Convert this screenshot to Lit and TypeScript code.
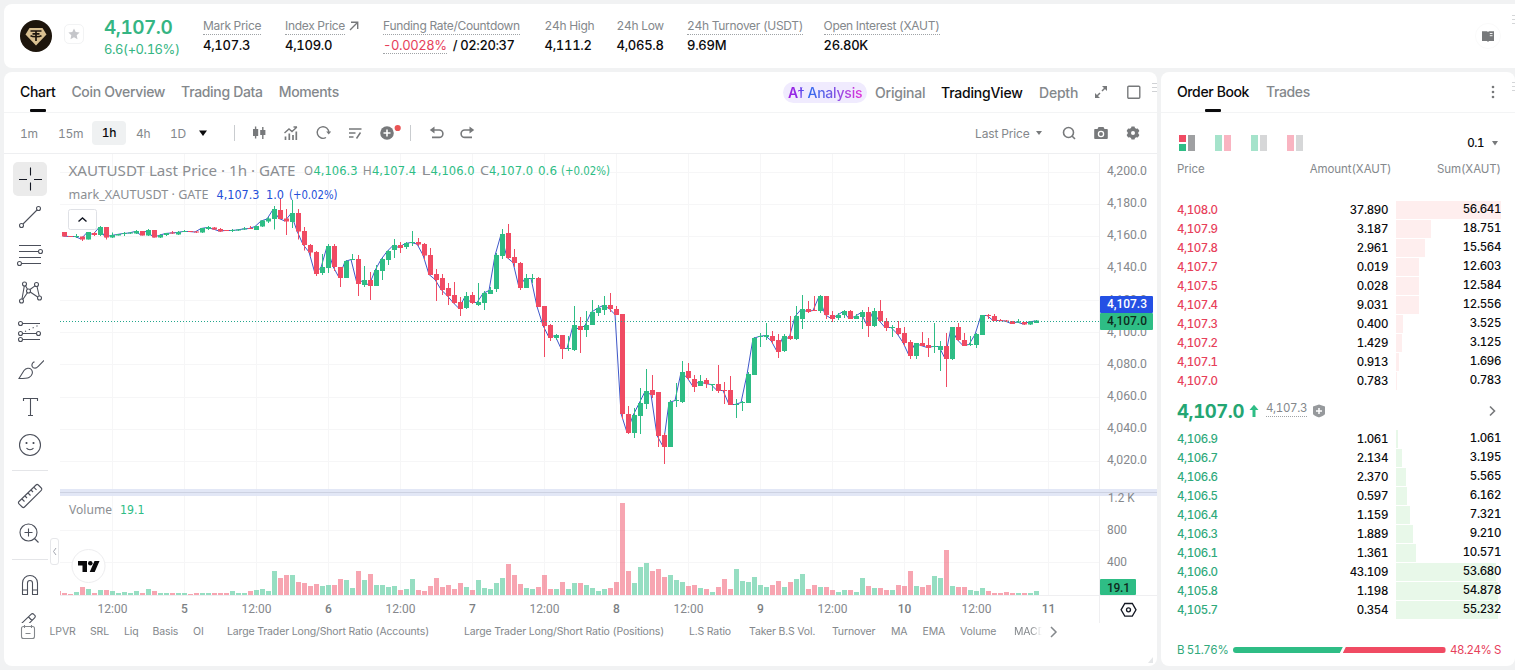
import { LitElement, css, html, svg } from 'lit';
import { customElement, property } from 'lit/decorators.js';
import { classMap } from 'lit/directives/class-map.js';
import { styleMap } from 'lit/directives/style-map.js';

// high, body top, body bottom, low, rising, volume (all in canvas units)
type Candle = [number, number, number, number, number, number];

const CANDLES: Candle[] = [
    [232, 232, 236.5, 236.5, 0, 2], [236, 236, 237, 237, 0, 1], [234, 236, 237, 238, 1, 3], [236.5, 236.5, 239.5, 241, 0, 8],
    [232, 232, 239.5, 239.5, 1, 6], [232, 233, 235, 236, 0, 2], [226, 227, 235, 236, 1, 5], [227, 227, 237.5, 239.5, 0, 5],
    [232.5, 235, 237.5, 238, 1, 4], [234, 234, 235.5, 235.5, 1, 2], [232, 233, 234, 236, 1, 3], [232, 232.5, 233.5, 234, 1, 2],
    [230, 231, 233.5, 234, 1, 4], [231, 231, 235.5, 235.5, 0, 2], [229, 230, 235.5, 236, 1, 6], [230, 230, 237.5, 237.5, 0, 4],
    [234, 235, 237.5, 238, 1, 2], [233, 233, 235, 236, 1, 2], [231, 232.5, 233.5, 234, 0, 2], [231, 232, 234.5, 235, 1, 2],
    [230, 231, 232, 232, 1, 2], [231, 231, 232, 232, 0, 1], [231, 231.5, 232.5, 233, 0, 2], [228, 228, 232.5, 233, 1, 2],
    [226, 227, 229, 230, 1, 2], [227, 227.5, 229.5, 230, 0, 2], [228, 229, 231.5, 232, 0, 2], [230, 230, 231, 231, 0, 2],
    [229, 230, 231, 232, 1, 4], [229, 229.5, 230.5, 231, 1, 2], [227, 228.5, 229.5, 230, 1, 2], [226, 228, 229, 229, 0, 4],
    [226, 226, 230, 230, 1, 5], [220, 220.5, 226.5, 227, 1, 6], [217, 218.5, 221.5, 223, 1, 4], [206, 209, 219, 229.5, 1, 24],
    [198, 210, 219, 219, 0, 17], [209, 218.5, 221.5, 235, 0, 20], [200, 213, 222, 228, 1, 20], [209, 213, 231.5, 239.5, 0, 13],
    [227, 231, 245, 250.5, 0, 12], [244, 245, 252.5, 256.5, 0, 9], [251, 252, 274, 276, 0, 11], [254, 267, 273, 275, 1, 9],
    [244, 246, 268, 273, 1, 10], [244, 246, 267, 271, 0, 10], [267, 267, 278, 287, 0, 16], [260, 261, 278, 278, 1, 15],
    [254, 259, 260, 260, 1, 7], [255, 259, 284, 296, 0, 24], [266, 280, 285, 287, 1, 15], [272, 280, 286, 300, 0, 21],
    [265, 270, 286, 286, 1, 10], [258, 259, 271, 280, 1, 10], [250, 251, 260, 265, 1, 8], [239, 245, 250, 258, 1, 9],
    [242, 245, 248, 253, 0, 5], [242, 243, 247, 249, 1, 6], [231, 242, 243, 246, 1, 16], [238, 242, 244.5, 246, 0, 5],
    [243, 244, 255.5, 260, 0, 4], [248, 255, 275, 275, 0, 9], [269, 274, 280, 301, 0, 17], [274, 278, 290, 295, 0, 8],
    [283, 288, 296, 305, 0, 10], [282, 295, 303, 304, 0, 6], [297, 302, 309, 316, 0, 12], [292, 296, 308, 309, 1, 8],
    [292, 295, 303, 304, 0, 5], [283, 302, 305, 306, 1, 15], [291, 293, 303, 310, 1, 7], [287, 290, 294, 294, 1, 6],
    [253, 255, 289, 292, 1, 12], [229, 234, 256, 259, 1, 17], [224, 233, 258, 259, 0, 31], [249, 257, 263, 267, 0, 20],
    [262, 263, 288, 290, 0, 11], [274, 278, 288, 288, 1, 7], [274, 278, 279, 283, 1, 6], [277, 278, 307, 307, 0, 8],
    [306, 306, 326, 357, 0, 20], [324, 325, 338, 341, 0, 6], [334, 335, 338, 340, 1, 6], [335, 335, 349, 359, 0, 13],
    [336, 348, 349, 351, 1, 6], [306, 325, 350, 351, 1, 12], [317, 326, 330, 353, 0, 12], [311, 325, 330, 337, 1, 10],
    [300, 312, 325, 325, 1, 7], [305, 308, 313, 316, 1, 4], [296, 305, 310, 315, 1, 6], [293, 305, 309, 312, 0, 7],
    [306, 309, 315, 315, 0, 13], [314, 314, 414, 419, 0, 92], [406, 414, 433, 434, 0, 24], [408, 415, 433, 438, 1, 12],
    [388, 403, 416, 434, 1, 28], [369, 391, 404, 409, 1, 32], [375, 390, 395, 398, 0, 24], [392, 392, 436, 447, 0, 26],
    [433, 435, 447, 464, 0, 18], [400, 402, 447, 447, 1, 20], [383, 400, 401, 407, 1, 15], [361, 372, 402, 403, 1, 13],
    [363, 371, 378, 380, 0, 9], [375, 379, 387, 392, 0, 10], [375, 381, 386, 386, 1, 7], [378, 380, 384, 388, 0, 6],
    [384, 384, 385, 391, 1, 3], [365, 384, 391, 393, 0, 8], [382, 390, 391, 404, 0, 16], [376, 390, 405, 405, 0, 6],
    [399, 404, 405, 418, 1, 26], [401, 402, 403, 411, 1, 14], [372, 374, 403, 403, 1, 13], [337, 338, 375, 375, 1, 18],
    [333, 336, 337, 347, 1, 10], [323, 335, 337, 340, 1, 8], [331, 336, 341, 344, 0, 10], [334, 340, 352, 358, 0, 14],
    [334, 336, 351, 352, 1, 8], [316, 336, 339, 340, 0, 13], [306, 316, 339, 340, 1, 16], [295, 309, 319, 329, 1, 21],
    [301, 309, 312, 313, 0, 6], [296, 310, 311, 311, 0, 10], [295, 296, 311, 313, 1, 8], [296, 296, 315, 319, 0, 8],
    [311, 315, 319, 322, 0, 5], [313, 315, 318, 320, 1, 3], [310, 311, 315, 318, 1, 5], [310, 311, 319, 319, 0, 5],
    [314, 316, 319, 319, 1, 3], [310, 312, 317, 329, 1, 17], [307, 312, 326, 337, 0, 9], [308, 311, 326, 327, 1, 7],
    [300, 311, 321, 322, 0, 7], [318, 321, 328, 331, 0, 5], [325, 327, 328, 337, 1, 5], [321, 328, 334, 335, 0, 10],
    [327, 333, 343, 346, 0, 9], [340, 342, 356, 359, 0, 24], [343, 343, 356, 359, 1, 9], [332, 343, 346, 346, 0, 8],
    [338, 345, 348, 357, 0, 10], [323, 346, 347, 353, 1, 19], [341, 346, 350, 371, 1, 17], [333, 346, 359, 387, 0, 45],
    [327, 327, 359, 360, 1, 9], [323, 327, 340, 341, 0, 8], [333, 340, 346, 346, 0, 8], [336, 344, 345, 346, 1, 5],
    [333, 334, 345, 348, 1, 4], [315, 315, 335, 335, 1, 7], [314, 315, 316, 319, 0, 4], [314, 316, 321, 321, 0, 2],
    [319, 320, 321, 321, 0, 2], [320, 320.5, 321.5, 322, 0, 3], [321, 321, 324, 324, 0, 2], [319, 321.5, 322.5, 323, 1, 2],
    [322, 322, 324.5, 325, 0, 2], [321.5, 321.5, 324.5, 325, 1, 2], [320, 320.5, 323, 323, 1, 4],
];

const ASKS: [string, string, string][] = [
    ['4,108.0', '37.890', '56.641'],
    ['4,107.9', '3.187', '18.751'],
    ['4,107.8', '2.961', '15.564'],
    ['4,107.7', '0.019', '12.603'],
    ['4,107.5', '0.028', '12.584'],
    ['4,107.4', '9.031', '12.556'],
    ['4,107.3', '0.400', '3.525'],
    ['4,107.2', '1.429', '3.125'],
    ['4,107.1', '0.913', '1.696'],
    ['4,107.0', '0.783', '0.783'],
];

const BIDS: [string, string, string][] = [
    ['4,106.9', '1.061', '1.061'],
    ['4,106.7', '2.134', '3.195'],
    ['4,106.6', '2.370', '5.565'],
    ['4,106.5', '0.597', '6.162'],
    ['4,106.4', '1.159', '7.321'],
    ['4,106.3', '1.889', '9.210'],
    ['4,106.1', '1.361', '10.571'],
    ['4,106.0', '43.109', '53.680'],
    ['4,105.8', '1.198', '54.878'],
    ['4,105.7', '0.354', '55.232'],
];

const MAX_SUM = 56.641;

@customElement('trade-header')
export class TradeHeader extends LitElement {
    static styles = css`
        :host {
            display: flex;
            align-items: center;
            height: 64px;
            padding-left: 16px;
            background: #fff;
            border-radius: 8px 0 0 8px;
            box-sizing: border-box;
            position: relative;
            font-size: 12px;
            color: #84888c;
        }
        .logo {
            width: 32px;
            height: 32px;
        }
        .star {
            width: 18px;
            height: 18px;
            margin-left: 12px;
            margin-top: -4px;
            border: 1px solid #f2f3f4;
            border-radius: 5px;
        }
        .last {
            width: 99px;
            margin-left: 20px;
            padding-top: 4px;
        }
        .last b {
            display: block;
            font-size: 19px;
            line-height: 22px;
            font-weight: 600;
            letter-spacing: -.5px;
            color: #35b583;
        }
        .last span {
            display: block;
            font-size: 13px;
            line-height: 20px;
            letter-spacing: -.45px;
            color: #35b583;
        }
        .stats {
            display: grid;
            grid-template-columns: 82px 98px 161.5px 72px 70.5px 136.5px 130px;
        }
        .label {
            display: flex;
            align-items: flex-start;
            height: 17px;
            line-height: 16px;
            white-space: nowrap;
            letter-spacing: -.3px;
        }
        .label svg {
            margin: 3px 0 0 4px;
        }
        .dotted {
            height: 16px;
            border-bottom: 1px dotted #9fa3a6;
        }
        .value {
            margin-top: 1px;
            height: 19px;
            line-height: 18px;
            font-size: 13px;
            font-weight: 500;
            letter-spacing: -.28px;
            white-space: nowrap;
            color: #0b0b0d;
        }
        .value .red {
            display: inline-block;
            line-height: 16px;
            font-weight: 400;
            color: #e7405a;
        }
        .value.rate {
            letter-spacing: -.4px;
        }
        .book {
            position: absolute;
            right: 14px;
            top: 19px;
        }
        .grip {
            position: absolute;
            right: 0;
            top: 10px;
        }
    `

    render() {
        return html`
            <svg class="logo" viewBox="0 0 32 32">
                <circle cx="16" cy="16" r="16" fill="#1d150c"/>
                <path d="M9.5 8h13l4 6.5L16 25.500 5.500 14.500z" fill="#d8bf90"/>
                <path d="M10.500 11h11M16 11v10M12.500 13.800h7M10.500 15.600c2 1.500 9 1.500 11 0" fill="none" stroke="#1d150c" stroke-width="1.700"/>
            </svg>
            <div class="star">
                <svg width="18" height="18" viewBox="0 0 18 18"><path d="M9 3.500l1.700 3.600 3.900.5-2.900 2.700.8 3.900L9 12.300l-3.500 1.900.8-3.900-2.900-2.700 3.900-.5z" fill="#c5c6ca"/></svg>
            </div>
            <div class="last"><b>4,107.0</b><span>6.6(+0.16%)</span></div>
            <div class="stats">
                <div><div class="label"><span class="dotted">Mark Price</span></div><div class="value">4,107.3</div></div>
                <div>
                    <div class="label">
                        <span class="dotted">Index Price</span>
                        <svg width="10" height="10" viewBox="0 0 10 10"><path d="M1 9l7.500-7.500M2 1.300h6.700V8" fill="none" stroke="#77797b" stroke-width="1.400"/></svg>
                    </div>
                    <div class="value">4,109.0</div>
                </div>
                <div><div class="label"><span class="dotted">Funding Rate/Countdown</span></div><div class="value rate"><span class="red dotted">-0.0028%</span>&nbsp; / 02:20:37</div></div>
                <div><div class="label">24h High</div><div class="value">4,111.2</div></div>
                <div><div class="label">24h Low</div><div class="value">4,065.8</div></div>
                <div><div class="label"><span class="dotted">24h Turnover (USDT)</span></div><div class="value">9.69M</div></div>
                <div><div class="label"><span class="dotted">Open Interest (XAUT)</span></div><div class="value">26.80K</div></div>
            </div>
            <svg class="book" width="26" height="26" viewBox="0 0 26 26">
                <circle cx="13" cy="13" r="12.500" fill="none" stroke="#fafafa"/>
                <path d="M7 8.200h5l1 .8 1-.8h5v9.800h-5l-1 1-1-1H7z" fill="#77797b"/>
                <path d="M14.800 10.500h2.700M14.800 12.700h2.700" stroke="#fff" stroke-width=".9"/>
            </svg>
            <svg class="grip" width="4" height="12" viewBox="0 0 4 12"><path d="M1 1.500h3M1 5.500h3M1 9.500h3" stroke="#d4d6d8"/></svg>
        `
    }
}

@customElement('tool-rail')
export class ToolRail extends LitElement {
    static styles = css`
        :host {
            display: flex;
            flex-direction: column;
            align-items: center;
            width: 36px;
            height: 463px;
            padding: 6px 12px 0 8px;
            overflow: hidden;
        }
        .tool {
            flex: none;
            display: flex;
            align-items: center;
            justify-content: center;
            width: 34px;
            height: 34px;
            margin: 2px 0;
            border-radius: 5px;
        }
        .tool.active {
            background: #ebebeb;
        }
        .tool svg {
            fill: none;
            stroke: #4c505b;
            stroke-width: 1.1;
        }
        .tool.active svg {
            stroke: #131722;
        }
        .line {
            flex: none;
            width: 36px;
            height: 1px;
            margin: 6px 0;
            background: #e4e5e8;
        }
    `

    private _icons = [
        svg`<path d="M14.500 2.500v8M14.500 17.500v8M3 14.500h8M18 14.500h8"/>`,
        svg`<circle cx="5.500" cy="22.500" r="2"/><circle cx="22.500" cy="5.500" r="2"/><path d="M7 21L21 7"/>`,
        svg`<path d="M3 4.500h22M3 10.500h19.500M3 16.500h22M5.500 22.500H25"/><circle cx="24.500" cy="10.500" r="2"/><circle cx="3.500" cy="22.500" r="2"/>`,
        svg`<circle cx="8.500" cy="5" r="2"/><circle cx="20.500" cy="5.500" r="2"/><circle cx="12.500" cy="12" r="2"/><circle cx="5.500" cy="22" r="2"/><circle cx="23.500" cy="19" r="2"/><path d="M8.300 7L6 20M9.500 6.800l2 3.500M14 10.500l5-3.600M6.800 20.500l4.700-7M14.200 13l7.500 5M21 7.500l2.200 9.500"/>`,
        svg`<circle cx="4.500" cy="6.500" r="2"/><circle cx="4.500" cy="16.500" r="2"/><circle cx="22.500" cy="16.500" r="2"/><circle cx="4.500" cy="22.500" r="2"/><path d="M6.500 6.500H24M6.500 16.500h14M6.500 22.500H24"/><path d="M9 14.500l13-6" stroke-dasharray="1.200 3"/>`,
        svg`<path d="M3 23.500l5-8c2-2.700 5.500-3 7.300-1 2.200 2.500.8 6.500-2.300 8-2 1-5 1-10 1zM17 7.500c-1.500 2-1.300 4 .3 5.300 2 .8 3.700 0 4.700-1.300l6-6M17 7.500l1.500-.8"/>`,
        svg`<path d="M7.500 8V5.500h14V8M14.500 5.500v17M12 22.500h5"/>`,
        svg`<circle cx="14" cy="14" r="10.500"/><path d="M10.500 17c1.500 2.300 5.500 2.300 7 0"/><path d="M10.500 11v2M17.500 11v2" stroke-width="1.700"/>`,
        svg`<path d="M3 19.500L20 3c.8-.8 1.500-.8 2.300 0l3 3c.8.800.8 1.500 0 2.300L8.500 25c-.8.8-1.500.8-2.300 0L3 21.800c-.8-.8-.8-1.500 0-2.300zM6 17l2.500 2.500M9 14l2 2M12 11l2.500 2.500M15 8l2 2M18 5.300l2.500 2.500"/>`,
        svg`<circle cx="12.500" cy="12.500" r="8.500"/><path d="M18.500 18.500l4 4M12.500 8.500v8M8.500 12.500h8"/>`,
        svg`<path d="M6.500 23.500V12a7.500 7.500 0 0 1 15 0v11.500h-5V12a2.500 2.500 0 0 0-5 0v11.500zM6.500 19h5M16.500 19h5"/>`,
        svg`<path d="M5 15L15 5.300c1-.9 2-.9 2.800 0l.8.800c.9.900.9 1.800 0 2.700L12 15.500M12.500 8l3.500 3.500M6.500 15h3M16 15h5.500"/>`,
    ];

    render() {
        return html`${this._icons.map((icon, i) => html`
            ${i === 8 || i === 10 ? html`<div class="line"></div>` : ''}
            <div class=${classMap({ tool: true, active: i === 0 })}>
                <svg width="28" height="28" viewBox="0 0 28 28">${icon}</svg>
            </div>
        `)}`
    }
}

@customElement('price-chart')
export class PriceChart extends LitElement {
    @property({ type: Array })
    public candles: Candle[] = [];

    static styles = css`
        :host {
            display: block;
            width: 1097px;
            height: 470px;
        }
        svg {
            display: block;
        }
        .grid {
            stroke: #f6f6f7;
            fill: none;
        }
        .axis {
            font: 12px Roboto, sans-serif;
            fill: #85888c;
        }
        .day {
            font-weight: 500;
            fill: #7c7f83;
        }
        .legend {
            font: 12.500px "Noto Sans", sans-serif;
            fill: #8b8e92;
        }
        .title {
            font-size: 15px;
        }
        .num {
            font: 12.500px "DejaVu Sans Condensed", "DejaVu Sans", sans-serif;
            font-stretch: condensed;
        }
        .up {
            fill: #2ebd85;
        }
        .down {
            fill: #f04b63;
        }
        .blue {
            fill: #2450d8;
        }
        .tag {
            font: 500 12px Roboto, sans-serif;
        }
    `

    private _text(x: number, y: number, width: number, label: string, cls: string) {
        return svg`<text x=${x} y=${y} textLength=${width} lengthAdjust="spacingAndGlyphs" class=${cls}>${label}</text>`;
    }

    private _candle(c: Candle, i: number) {
        const [high, top, bottom, low, rising, volume] = c;
        const x = 62 + i * 6;
        const cls = rising ? 'up' : 'down';
        return svg`
            <rect x=${x} y=${595 - volume} width="5" height=${volume} class=${cls} opacity=".5"/>
            <rect x=${x + 2} y=${high} width="1" height=${low - high} class=${cls}/>
            <rect x=${x} y=${top} width="5" height=${Math.max(1, bottom - top)} class=${cls}/>
        `;
    }

    render() {
        const hours = Array.from({ length: 14 }, (_, i) => 112.5 + i * 72);
        const prices = Array.from({ length: 10 }, (_, i) => 4200 - i * 20);
        // the mark price runs slightly ahead of the last price
        const mark = this.candles.map((c, i) => `${63 + i * 6},${c[4] ? c[1] + .5 : c[2] - .5}`).join(' ');

        return html`
            <svg width="1097" height="470" viewBox="60 154 1097 470">
                ${hours.map((x) => svg`<path class="grid" d="M${x} 154V595"/>`)}
                ${prices.map((_, i) => svg`<path class="grid" d="M60 ${Math.round(171.500 + i * 32.150) + .5}H1100"/>`)}
                <path class="grid" d="M60 530.500H1100M60 562.500H1100"/>
                <path d="M60 595.500H1157M1099.500 154V623" stroke="#efeff1"/>

                <polyline points=${mark} fill="none" stroke="#3f58c9"/>
                ${this.candles.map((c, i) => this._candle(c, i))}
                <rect x="60" y="591" width="1" height="4" class="down" opacity=".5"/>
                <path d="M60 321.500H1100" stroke="#22a68c" stroke-dasharray="1 2"/>

                ${prices.map((p, i) => this._text(1107, 175 + i * 32.150, 40, `4,${String(p).slice(1)}.0`, 'axis'))}
                <rect x="60" y="489" width="1097" height="7" fill="#dde3f5" opacity=".85"/>
                <path d="M60 492.500H1157" stroke="#cdd2e2"/>
                ${this._text(1108, 502, 26.500, '1.2 K', 'axis')}
                ${this._text(1107, 534, 20, '800', 'axis')}
                ${this._text(1107, 566, 20, '400', 'axis')}

                <rect x="1100" y="296" width="53" height="17" rx="1" fill="#2450e4"/>
                <rect x="1100" y="313" width="53" height="17" rx="1" fill="#2ebd85"/>
                <rect x="1100" y="579" width="36" height="16" rx="1" fill="#2ebd85"/>
                <g class="tag">
                    <text x="1107" y="308" textLength="40" fill="#fff">4,107.3</text>
                    <text x="1107" y="325" textLength="40" fill="#0e2b20">4,107.0</text>
                    <text x="1107" y="592" textLength="23" fill="#0e2b20">19.1</text>
                </g>

                ${hours.map((x, i) => svg`<text x=${x} y="613" text-anchor="middle" class=${i % 2 ? 'axis day' : 'axis'}>${i % 2 ? 5 + (i - 1) / 2 : '12:00'}</text>`)}

                ${this._text(68.500, 176, 227, 'XAUTUSDT Last Price · 1h · GATE', 'legend title')}
                ${['O4,106.3', 'H4,107.4', 'L4,106.0', 'C4,107.0'].map((t, i) => svg`
                    ${this._text(304 + i * 58.700, 175, 9, t[0], 'legend')}
                    ${this._text(313.500 + i * 58.500, 175, 44, t.slice(1), 'num up')}
                `)}
                ${this._text(538, 175, 19, '0.6', 'num up')}
                ${this._text(561, 175, 49, '(+0.02%)', 'num up')}
                ${this._text(68.500, 199, 140, 'mark_XAUTUSDT · GATE', 'legend')}
                ${this._text(216.500, 199, 43, '4,107.3', 'num blue')}
                ${this._text(266, 199, 18, '1.0', 'num blue')}
                ${this._text(289, 199, 48.500, '(+0.02%)', 'num blue')}
                ${this._text(69, 514, 43, 'Volume', 'legend')}
                ${this._text(120, 514, 24.500, '19.1', 'num up')}

                <rect x="68.500" y="209.500" width="28" height="20" rx="2" fill="#fff" stroke="#dfe1e6"/>
                <path d="M78.500 221.500l4-3.500 4 3.500" fill="none" stroke="#131722" stroke-width="1.400"/>

                <circle cx="88.500" cy="566" r="16.500" fill="#fff" stroke="#ededef"/>
                <path d="M78 561h9v11h-4.500v-6.500H78zM94.500 561h5l-4.800 11h-5z" fill="#0a0a0c"/>
                <circle cx="90.300" cy="563.300" r="2.300" fill="#0a0a0c"/>

                <path d="M1124.800 603.500h7.500l3.700 6.300-3.700 6.300h-7.500l-3.700-6.300z" fill="none" stroke="#131722" stroke-width="1.300"/>
                <circle cx="1128.500" cy="609.800" r="2" fill="none" stroke="#131722" stroke-width="1.300"/>
            </svg>
        `
    }
}

@customElement('chart-panel')
export class ChartPanel extends LitElement {
    static styles = css`
        :host {
            display: block;
            position: relative;
            background: #fff;
            border-radius: 8px;
            overflow: hidden;
            color: #84888c;
        }
        .tabs {
            display: flex;
            align-items: center;
            height: 40px;
            padding-left: 16px;
            border-bottom: 1px solid #f3f4f5;
            font-size: 14px;
            font-weight: 500;
            letter-spacing: -.22px;
            white-space: nowrap;
        }
        .tab {
            margin-right: 16px;
            line-height: 40px;
            letter-spacing: -.33px;
            position: relative;
        }
        .tab.active,
        .view.active {
            color: #0b0b0d;
        }
        .tab.active::after {
            content: '';
            position: absolute;
            left: 50%;
            bottom: 0;
            width: 16px;
            height: 3px;
            margin-left: -8px;
            border-radius: 1px;
            background: #0b0b0d;
        }
        .views {
            display: grid;
            grid-template-columns: 92px 66px 98px 54px 33px 26px 5px;
            align-items: center;
            margin-left: auto;
        }
        .ai {
            justify-self: start;
            height: 21px;
            line-height: 21px;
            padding: 0 5px;
            border-radius: 11px;
            background: #f0ebfe;
        }
        .ai span {
            background: linear-gradient(90deg, #a020e0 0, #8a2be8 14%, #2a6cf0 24%, #5b60e8 50%, #b040e0 80%, #e030d8 100%);
            -webkit-background-clip: text;
            background-clip: text;
            color: transparent;
        }
        .ai b {
            font-weight: 600;
        }
        .drag {
            margin-top: -9px;
        }
        .toolbar {
            display: flex;
            align-items: center;
            height: 40px;
            padding-left: 16px;
            border-bottom: 1px solid #eeeff1;
            font-size: 12px;
        }
        .intervals {
            display: grid;
            grid-template-columns: 35px 38px 40px 34px 31px 36px;
            align-items: center;
            letter-spacing: -.25px;
        }
        .interval.active {
            justify-self: start;
            margin-left: -1px;
            width: 34px;
            line-height: 24px;
            text-align: center;
            border-radius: 4px;
            background: #eff1f2;
            color: #0b0b0d;
            font-weight: 500;
        }
        .divider {
            width: 1px;
            height: 16px;
            background: #c9cccf;
        }
        .actions {
            display: flex;
            align-items: center;
        }
        .actions svg,
        .right svg {
            display: block;
        }
        .actions svg {
            margin-left: 16px;
        }
        .actions .divider {
            margin: 0 1px 0 9px;
        }
        .right {
            display: grid;
            grid-template-columns: 60px 26px 32px 32px 32px;
            align-items: center;
            margin-left: auto;
        }
        .right span {
            letter-spacing: -.15px;
        }
        .body {
            display: flex;
        }
        .collapse {
            position: absolute;
            left: 46px;
            top: 466px;
            width: 7px;
            height: 25px;
            border: 1px solid #e6e7ea;
            border-radius: 3px;
            background: #fff;
        }
        .collapse svg {
            display: block;
        }
        .indicators {
            position: absolute;
            left: 16px;
            top: 551px;
            display: grid;
            grid-template-columns: 29.500px 40.500px 34px 28.500px 40.500px 34px 237px 225px 60px 83px 59px 31.500px 37.500px 54px 35px 12px;
            align-items: center;
            height: 17px;
            background: #fff;
            font-size: 10.500px;
            letter-spacing: -.13px;
            white-space: nowrap;
        }
        .fade {
            width: 28px;
            overflow: hidden;
            -webkit-mask-image: linear-gradient(90deg, #000 60%, transparent);
            mask-image: linear-gradient(90deg, #000 60%, transparent);
        }
        .corner {
            position: absolute;
            right: 4px;
            bottom: 3px;
        }
    `

    render() {
        const indicators = ['LPVR', 'SRL', 'Liq', 'Basis', 'OI', 'Large Trader Long/Short Ratio (Accounts)',
            'Large Trader Long/Short Ratio (Positions)', 'L.S Ratio', 'Taker B.S Vol.', 'Turnover', 'MA', 'EMA', 'Volume'];

        return html`
            <div class="tabs">
                <div class="tab active">Chart</div>
                <div class="tab">Coin Overview</div>
                <div class="tab">Trading Data</div>
                <div class="tab">Moments</div>
                <div class="views">
                    <div class="ai"><span><b>Aϯ</b> Analysis</span></div>
                    <div class="view">Original</div>
                    <div class="view active">TradingView</div>
                    <div class="view">Depth</div>
                    <svg width="16" height="16" viewBox="0 0 16 16" fill="none" stroke="#77797b" stroke-width="1.500">
                        <path d="M9 7l4-4M7 9l-4 4"/><path d="M9 2h5v5zM2 9v5h5z" fill="#77797b" stroke="none"/>
                    </svg>
                    <svg width="16" height="16" viewBox="0 0 16 16"><rect x="1.800" y="2.300" width="12" height="12" rx="1" fill="none" stroke="#77797b" stroke-width="1.400"/></svg>
                    <svg class="drag" width="5" height="12" viewBox="0 0 5 12"><path d="M0 1.500h5M0 5.500h5M0 9.500h5" stroke="#d0d2d5"/></svg>
                </div>
            </div>
            <div class="toolbar">
                <div class="intervals">
                    <span class="interval">1m</span>
                    <span class="interval">&nbsp;15m</span>
                    <span class="interval active">1h</span>
                    <span class="interval">&nbsp;4h</span>
                    <span class="interval">&nbsp;1D</span>
                    <svg width="10" height="8" viewBox="0 0 10 8"><path d="M1 1.500h8L5 7z" fill="#0b0b0d"/></svg>
                </div>
                <div class="divider"></div>
                <div class="actions">
                    <svg width="16" height="16" viewBox="0 0 16 16" fill="#77797b"><path d="M2 4h1.900V1.500h1.400V4h1.900v7H5.300v2.500H3.900V11H2zM9.200 5h1.900V2h1.400v3h1.900v5h-1.900v4h-1.400v-4H9.200z"/></svg>
                    <svg width="16" height="16" viewBox="0 0 16 16" fill="none" stroke="#77797b" stroke-width="1.400"><path d="M1.500 8L6 4l3 2.500L14 2M10.500 2H14"/><path d="M2.500 11.500V15M6.300 8.500V15M10 10V15M13.300 6.500V15" stroke-width="1.700"/></svg>
                    <svg width="16" height="16" viewBox="0 0 16 16" fill="none" stroke="#77797b" stroke-width="1.400"><path d="M11 12.500a5.800 5.800 0 1 1 2.800-5"/><path d="M11.200 6.500h5l-2.500 3z" fill="#77797b" stroke="none"/></svg>
                    <svg width="16" height="16" viewBox="0 0 16 16" fill="none" stroke="#77797b" stroke-width="1.500"><path d="M2 4h12.500M2 8h6.500M2 12h4.500M9.500 13.500l4-6"/></svg>
                    <svg width="22" height="18" viewBox="0 0 22 18"><circle cx="8" cy="9" r="6.800" fill="#77797b"/><path d="M8 5.500v7M4.500 9h7" stroke="#fff" stroke-width="1.600"/><circle cx="18.700" cy="4" r="3.100" fill="#ea5455"/></svg>
                    <div class="divider"></div>
                    <svg width="16" height="16" viewBox="0 0 16 16" fill="none" stroke="#77797b" stroke-width="1.600"><path d="M4 5h7.200a2.700 2.700 0 0 1 0 7.400H4"/><path d="M6.500 1.500v7L1.800 5z" fill="#77797b" stroke="none"/></svg>
                    <svg width="16" height="16" viewBox="0 0 16 16" fill="none" stroke="#77797b" stroke-width="1.600"><path d="M12 5H4.800a2.700 2.700 0 0 0 0 7.400H12"/><path d="M9.500 1.500v7L14.200 5z" fill="#77797b" stroke="none"/></svg>
                </div>
                <div class="right">
                    <span>Last Price</span>
                    <svg width="8" height="6" viewBox="0 0 8 6"><path d="M1 1h6L4 5z" fill="#77797b"/></svg>
                    <svg width="16" height="16" viewBox="0 0 16 16" fill="none" stroke="#77797b" stroke-width="1.600"><circle cx="7.500" cy="7.500" r="5"/><path d="M11 11l3 3"/></svg>
                    <svg width="16" height="16" viewBox="0 0 16 16"><path d="M2 4h2.500l1-2h5l1 2H14a.8.8 0 0 1 .8.800V13a1 1 0 0 1-1 1H2a1 1 0 0 1-.8-1V4.800A.8.8 0 0 1 2 4z" fill="#77797b"/><circle cx="8" cy="9" r="2.600" fill="none" stroke="#fff" stroke-width="1.300"/></svg>
                    <svg width="16" height="16" viewBox="0 0 16 16"><path d="M6.500 1.500h3l.5 1.500 1.300.800 1.600-.3 1.500 2.600L13.300 7.300v1.400l1.100 1.200-1.500 2.600-1.600-.3L10 13l-.5 1.500h-3L6 13l-1.300-.8-1.600.3-1.500-2.600 1.100-1.200V7.300L1.600 6.100l1.500-2.600 1.600.3L6 3z" fill="#77797b"/><circle cx="8" cy="8" r="2" fill="#fff"/></svg>
                </div>
            </div>
            <div class="body">
                <tool-rail></tool-rail>
                <price-chart .candles=${CANDLES}></price-chart>
            </div>
            <div class="collapse"><svg width="7" height="25" viewBox="0 0 7 25"><path d="M5 9l-2.500 3.500L5 16" fill="none" stroke="#a3a6af"/></svg></div>
            <div class="indicators">
                <svg width="16" height="16" viewBox="0 0 16 16" fill="none" stroke="#84888c" stroke-width="1.100"><rect x="1.500" y="2.500" width="13" height="12" rx="2"/><path d="M4.500 1v3M11.500 1v3M5.500 9.500h5M6.500 2.500h3"/></svg>
                ${indicators.map((name) => html`<span>${name}</span>`)}
                <span class="fade">MACD</span>
                <svg width="9" height="12" viewBox="0 0 9 12"><path d="M2 1l5 5-5 5" fill="none" stroke="#84888c" stroke-width="1.500"/></svg>
            </div>
            <svg class="corner" width="5" height="6" viewBox="0 0 5 6"><path d="M5 0v6H0z" fill="#e4e6e8"/></svg>
        `
    }
}

@customElement('order-book')
export class OrderBook extends LitElement {
    static styles = css`
        :host {
            display: flex;
            flex-direction: column;
            background: #fff;
            border-radius: 8px;
            position: relative;
            font-size: 12px;
            color: #84888c;
        }
        .tabs {
            display: flex;
            height: 40px;
            padding: 0 16px;
            border-bottom: 1px solid #f3f4f5;
            line-height: 40px;
            font-size: 14px;
            font-weight: 500;
            letter-spacing: -.38px;
        }
        .tab {
            position: relative;
            margin-right: 17px;
        }
        .tab.active {
            color: #0b0b0d;
        }
        .tab.active::after {
            content: '';
            position: absolute;
            left: 50%;
            bottom: 0;
            width: 16px;
            height: 3px;
            margin-left: -8px;
            border-radius: 1px;
            background: #0b0b0d;
        }
        .menu {
            margin: 12px 0 0 auto;
        }
        .modes {
            display: flex;
            align-items: center;
            gap: 18px;
            height: 18px;
            padding: 21px 16px 0 17px;
        }
        .step {
            display: flex;
            align-items: center;
            gap: 7px;
            margin-left: auto;
            font-size: 11.500px;
            font-weight: 500;
            letter-spacing: -.4px;
            color: #0b0b0d;
        }
        .head {
            display: grid;
            grid-template-columns: 1fr 1fr 109.500px;
            height: 34px;
            padding: 0 14px 0 16px;
            line-height: 34px;
            text-align: right;
            font-size: 11.500px;
            letter-spacing: -.08px;
        }
        .head span:first-child {
            text-align: left;
        }
        .rows {
            margin-top: 15px;
        }
        .rows.bids {
            margin-top: 0;
        }
        .row {
            display: grid;
            grid-template-columns: 1fr 1fr 8px 105px;
            height: 19px;
            padding: 0 14px 0 16px;
            line-height: 19px;
            font-size: 11.500px;
            font-weight: 500;
            letter-spacing: -.35px;
            color: #0b0b0d;
        }
        .price {
            letter-spacing: -.4px;
            color: #e7405a;
        }
        .bids .price {
            color: #2fa97b;
        }
        .amount {
            text-align: right;
        }
        .sum {
            grid-column: 4;
            position: relative;
            line-height: 17px;
            text-align: right;
        }
        .sum span {
            position: relative;
        }
        .depth {
            position: absolute;
            left: 0;
            top: 0;
            height: 18px;
            background: #feeeee;
        }
        .bids .depth {
            background: #e8f8e9;
        }
        .mid {
            display: flex;
            align-items: center;
            height: 39px;
            padding: 0 18px 0 16px;
        }
        .mid b {
            width: 72px;
            font-size: 18.500px;
            font-weight: 700;
            letter-spacing: -.4px;
            color: #24a673;
        }
        .mid .index {
            height: 15px;
            line-height: 14px;
            margin: -3px 5px 0 7px;
            border-bottom: 1px dotted #9fa3a6;
            font-size: 11.500px;
            letter-spacing: -.35px;
        }
        .mid .more {
            margin-left: auto;
        }
        .ratio {
            display: flex;
            align-items: center;
            justify-content: space-between;
            padding: 22px 14px 0 16px;
            line-height: 16px;
            font-size: 11.500px;
            letter-spacing: -.45px;
            white-space: nowrap;
        }
        .ratio .buy {
            color: #2fa97b;
        }
        .ratio .sell {
            color: #e7405a;
        }
        .bars {
            display: flex;
            width: 213px;
            height: 6px;
        }
        .bars i {
            background: #2ebd85;
            border-radius: 3px 0 0 3px;
            clip-path: polygon(0 0, 100% 0, calc(100% - 3px) 100%, 0 100%);
        }
        .bars i:last-child {
            flex: 1;
            background: #f04b63;
            border-radius: 0 3px 3px 0;
            clip-path: polygon(3px 0, 100% 0, 100% 100%, 0 100%);
        }
        .grip {
            position: absolute;
            right: 0;
            top: 9px;
        }
    `

    private _row([price, amount, sum]: [string, string, string]) {
        return html`
            <div class="row">
                <span class="price">${price}</span>
                <span class="amount">${amount}</span>
                <div class="sum">
                    <div class="depth" style=${styleMap({ width: `${Number(sum) / MAX_SUM * 100}%` })}></div>
                    <span>${sum}</span>
                </div>
            </div>
        `
    }

    render() {
        return html`
            <div class="tabs">
                <span class="tab active">Order Book</span>
                <span class="tab">Trades</span>
                <svg class="menu" width="12" height="16" viewBox="0 0 12 16" fill="#77797b"><circle cx="6" cy="3" r="1.300"/><circle cx="6" cy="8" r="1.300"/><circle cx="6" cy="13" r="1.300"/></svg>
            </div>
            <div class="modes">
                <svg width="18" height="18" viewBox="0 0 18 18"><path d="M1 1h7v7H1z" fill="#f04b63"/><path d="M1 10h7v7H1z" fill="#2ebd85"/><path d="M10 1h7v16h-7z" fill="#9fa0a2"/></svg>
                <svg width="18" height="18" viewBox="0 0 18 18"><path d="M1 1h7v16H1z" fill="#a5e3cb"/><path d="M10 1h7v16h-7z" fill="#f9b4c1"/></svg>
                <svg width="18" height="18" viewBox="0 0 18 18"><path d="M1 1h7v16H1z" fill="#a5e3cb"/><path d="M10 1h7v16h-7z" fill="#d6d7d8"/></svg>
                <svg width="18" height="18" viewBox="0 0 18 18"><path d="M1 1h7v16H1z" fill="#f9b4c1"/><path d="M10 1h7v16h-7z" fill="#d6d7d8"/></svg>
                <div class="step">0.1 <svg width="8" height="6" viewBox="0 0 8 6"><path d="M1 1h6L4 5.500z" fill="#77797b"/></svg></div>
            </div>
            <div class="head"><span>Price</span><span>Amount(XAUT)</span><span>Sum(XAUT)</span></div>
            <div class="rows">${ASKS.map((r) => this._row(r))}</div>
            <div class="mid">
                <b>4,107.0</b>
                <svg width="10" height="14" viewBox="0 0 10 14"><path d="M5 .8l4.500 5.200H6.500V13h-3V6H.5z" fill="#2ebd85"/></svg>
                <span class="index">4,107.3</span>
                <svg width="14" height="14" viewBox="0 0 14 14"><path d="M7 .5l6 2v7c0 1.800-3.500 3-6 4-2.500-1-6-2.200-6-4v-7z" fill="#96999c"/><path d="M7 4v6M4 7h6" stroke="#fff" stroke-width="1.500"/></svg>
                <svg class="more" width="9" height="12" viewBox="0 0 9 12"><path d="M2 1.500L6.500 6 2 10.500" fill="none" stroke="#77797b" stroke-width="1.600"/></svg>
            </div>
            <div class="rows bids">${BIDS.map((r) => this._row(r))}</div>
            <div class="ratio">
                <span class="buy">B 51.76%</span>
                <div class="bars"><i style=${styleMap({ width: '51.76%' })}></i><i></i></div>
                <span class="sell">48.24% S</span>
            </div>
            <svg class="grip" width="4" height="12" viewBox="0 0 4 12"><path d="M1 1.500h3M1 5.500h3M1 9.500h3" stroke="#d4d6d8"/></svg>
        `
    }
}

@customElement('app-root')
export class AppRoot extends LitElement {
    static styles = css`
        :host {
            display: grid;
            grid-template-rows: 64px 594px;
            gap: 4px;
            width: 1515px;
            height: 670px;
            padding: 4px 0 4px 4px;
            box-sizing: border-box;
            overflow: hidden;
            background: #f1f2f3;
            font-family: Inter, "Liberation Sans", sans-serif;
            font-variant-numeric: tabular-nums;
        }
        .main {
            display: grid;
            grid-template-columns: 1153px 354px;
            gap: 4px;
        }
    `

    render() {
        return html`
            <trade-header></trade-header>
            <div class="main">
                <chart-panel></chart-panel>
                <order-book></order-book>
            </div>
        `
    }
}
